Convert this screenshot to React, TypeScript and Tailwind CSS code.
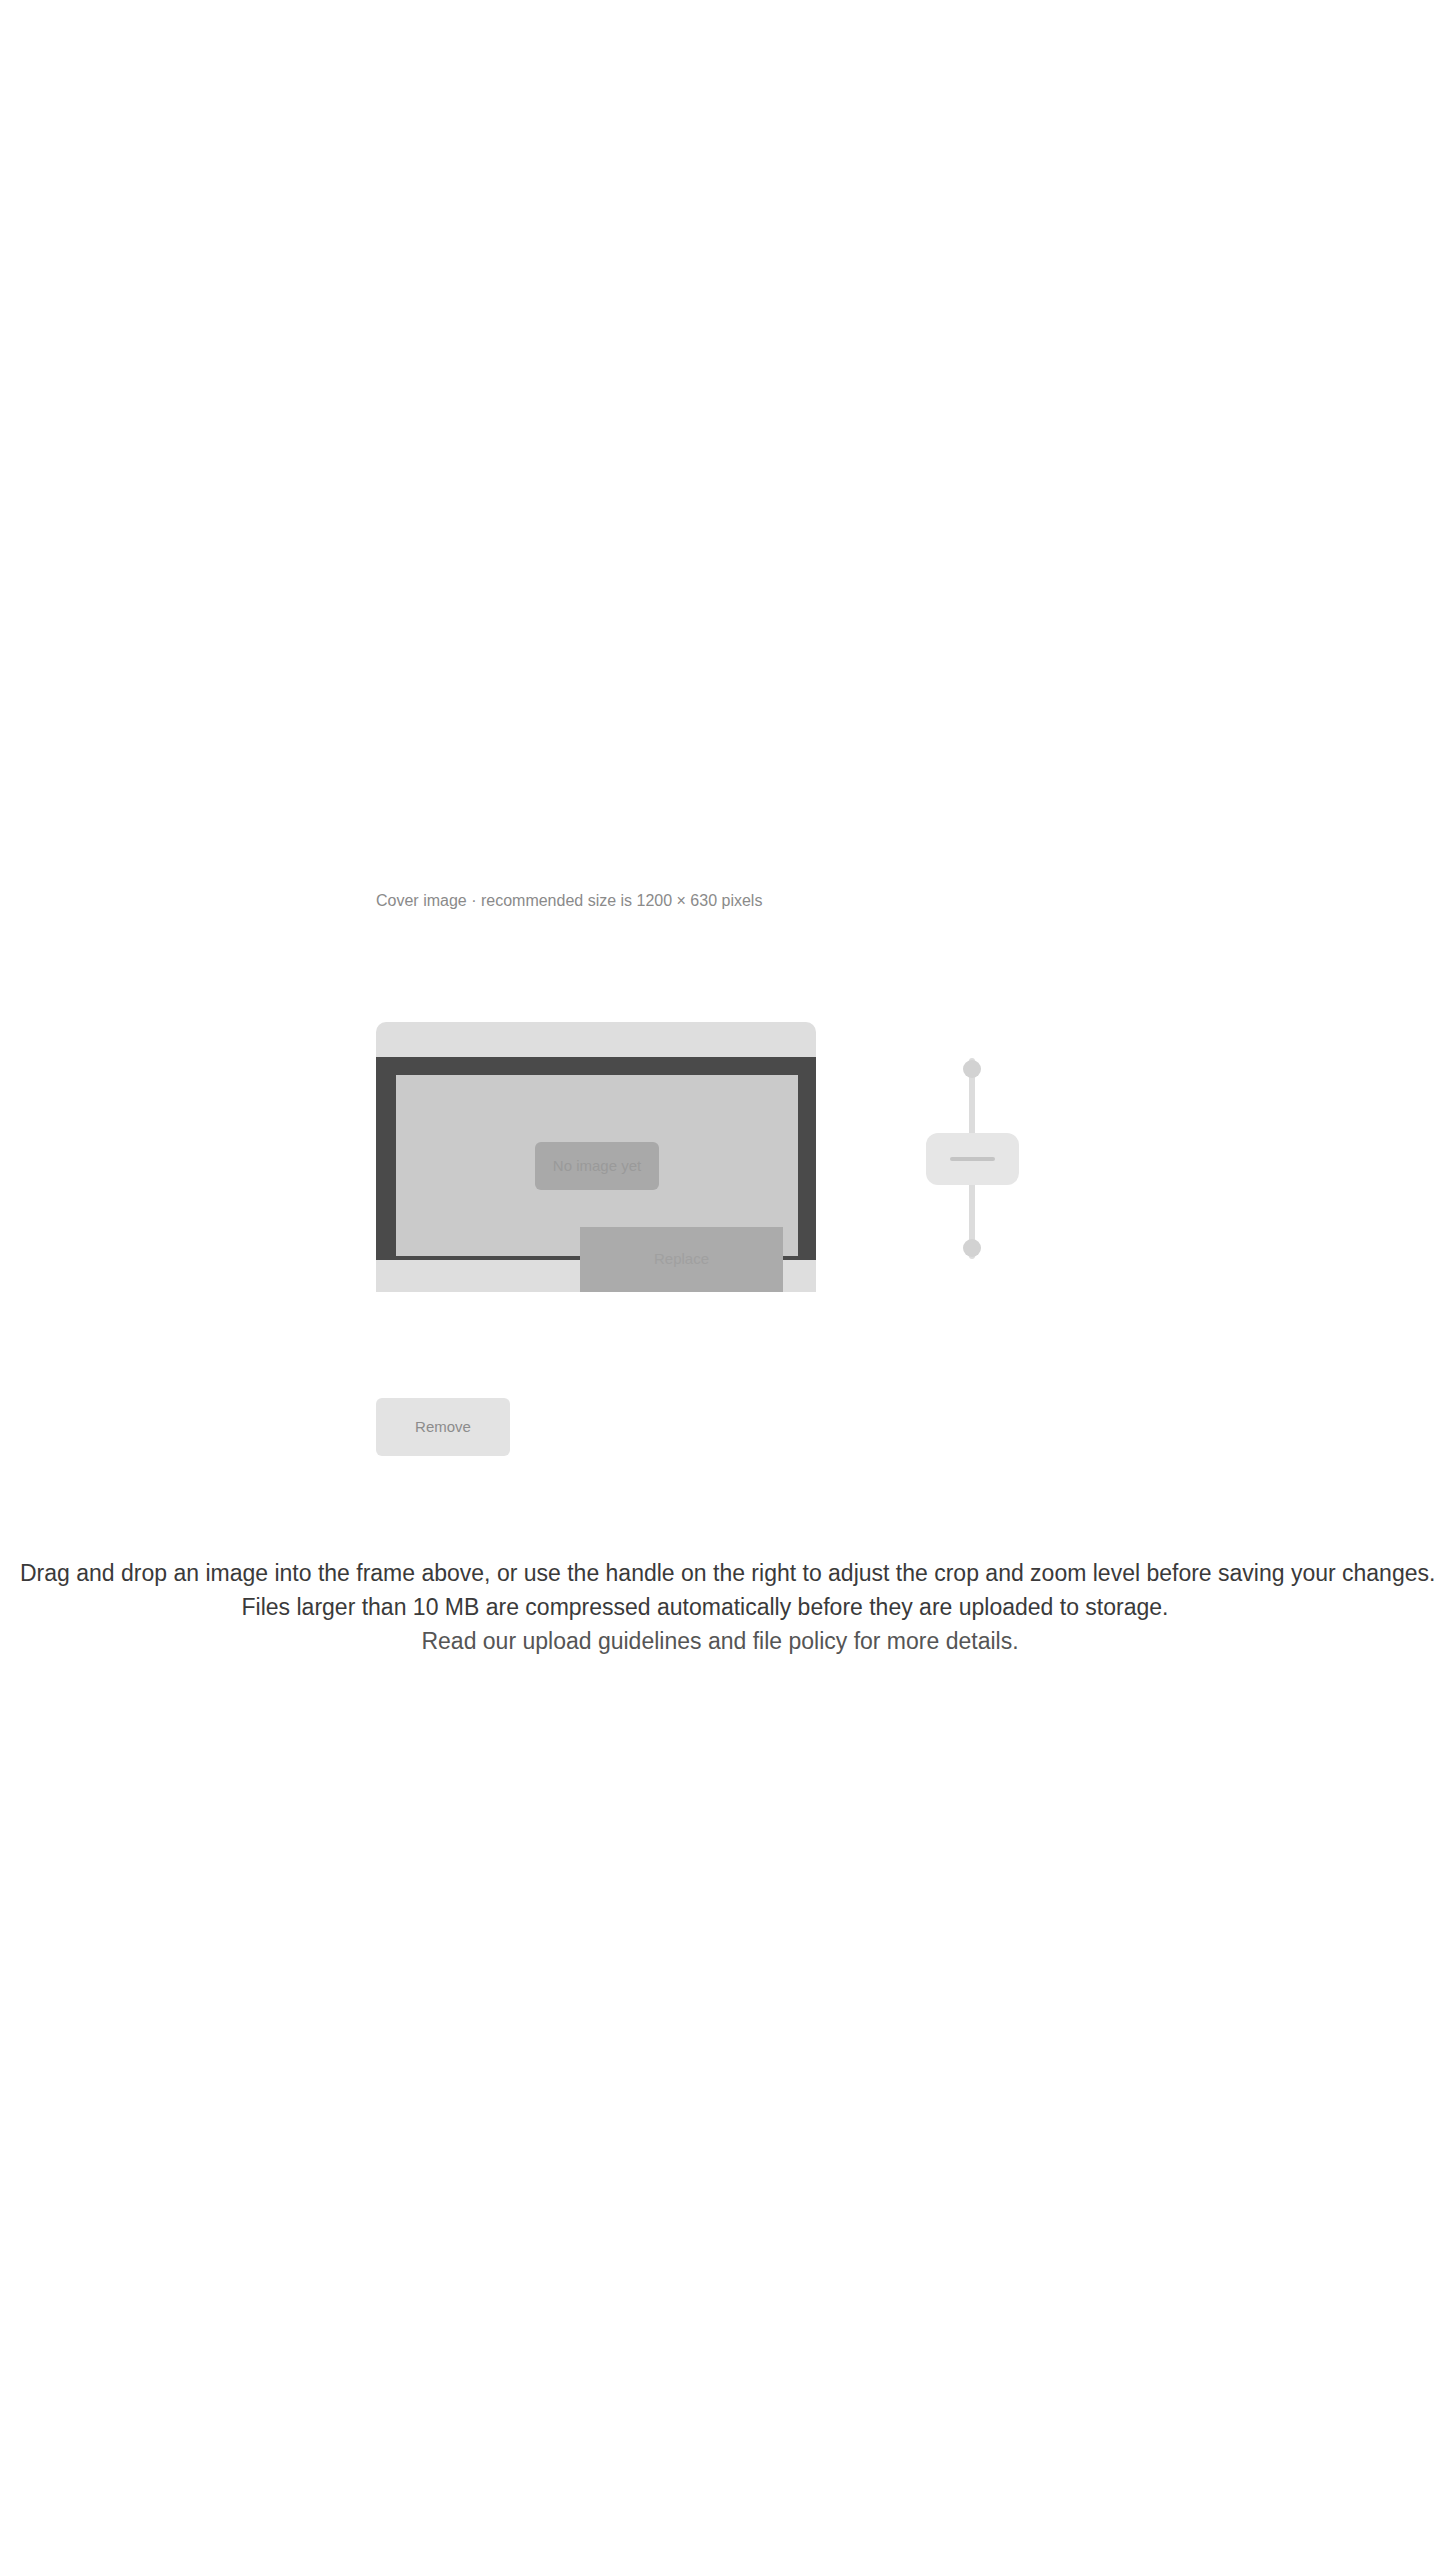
import React from "react";

function SliderHandle() {
  return (
    <svg width="101" height="203" viewBox="0 0 101 203" className="mt-[35px] shrink-0">
      <line x1="50" y1="4" x2="50" y2="199" stroke="#dcdcdc" strokeWidth="6" strokeLinecap="round" />
      <circle cx="50" cy="12" r="9" fill="#d2d2d2" />
      <circle cx="50" cy="191" r="9" fill="#d2d2d2" />
      <rect x="4" y="76" width="93" height="52" rx="12" fill="#e6e6e6" />
      <line x1="30" y1="102" x2="71" y2="102" stroke="#c4c4c4" strokeWidth="4" strokeLinecap="round" />
    </svg>
  );
}

export default function App() {
  return (
    <div
      className="min-h-[2560px] w-full bg-white"
      style={{ fontFamily: '"Liberation Sans", Arial, sans-serif' }}
    >
      <div className="mx-auto flex w-[688px] flex-col items-start pt-[882px]">
        <p className="h-[38px] whitespace-nowrap text-[16px] leading-[38px] text-[#8a8a8a]">
          Cover image · recommended size is 1200 × 630 pixels
        </p>

        <div className="mt-[102px] flex items-start gap-[106px]">
          <div className="relative h-[270px] w-[440px] rounded-t-[10px] bg-[#dedede] pt-[35px]">
            <div className="flex h-[203px] items-center justify-center border-t-[18px] border-r-[18px] border-b-[4px] border-l-[20px] border-[#4a4a4a] bg-[#cacaca]">
              <span className="rounded-[6px] bg-[#a9a9a9] px-[18px] py-[10px] text-[15px] leading-[28px] text-[#9a9a9a]">
                No image yet
              </span>
            </div>
            <button className="absolute right-[33px] bottom-0 h-[65px] w-[203px] bg-[#ababab] text-[15px] text-[#a0a0a0]">
              Replace
            </button>
          </div>
          <SliderHandle />
        </div>

        <button className="mt-[106px] h-[58px] w-[134px] rounded-[6px] bg-[#e3e3e3] text-[15px] text-[#8c8c8c]">
          Remove
        </button>
      </div>

      <div className="mt-[100px] px-[20px] text-center text-[23px] leading-[34px] text-[#3a3a3a]">
        <span className="block whitespace-nowrap">
          Drag and drop an image into the frame above, or use the handle on the right to adjust the crop and zoom level before saving your changes.
        </span>
        <span className="block whitespace-nowrap pr-[30px]">
          Files larger than 10 MB are compressed automatically before they are uploaded to storage.
        </span>
        <span className="block whitespace-nowrap text-[#555555]">
          Read our upload guidelines and file policy for more details.
        </span>
      </div>
    </div>
  );
}
